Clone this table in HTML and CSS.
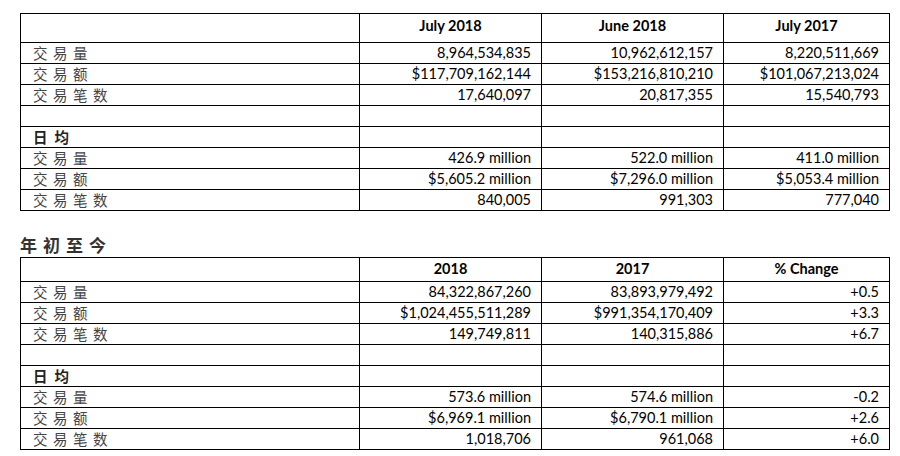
FILE: index.html
```html
<!DOCTYPE html>
<html lang="zh">
<head>
<meta charset="utf-8">
<link rel="stylesheet" href="styles.css">
</head>
<body>
<div class="page">
  <table class="grid grid-month">
    <colgroup><col class="c-label"><col class="c-val"><col class="c-val"><col class="c-last"></colgroup>
    <tr class="head"><td></td><th>July 2018</th><th>June 2018</th><th>July 2017</th></tr>
    <tr><td class="lbl">交易量</td><td class="num">8,964,534,835</td><td class="num">10,962,612,157</td><td class="num">8,220,511,669</td></tr>
    <tr><td class="lbl">交易额</td><td class="num">$117,709,162,144</td><td class="num">$153,216,810,210</td><td class="num">$101,067,213,024</td></tr>
    <tr><td class="lbl">交易笔数</td><td class="num">17,640,097</td><td class="num">20,817,355</td><td class="num">15,540,793</td></tr>
    <tr><td></td><td></td><td></td><td></td></tr>
    <tr><td class="lbl sub">日均</td><td></td><td></td><td></td></tr>
    <tr><td class="lbl">交易量</td><td class="num">426.9 million</td><td class="num">522.0 million</td><td class="num">411.0 million</td></tr>
    <tr><td class="lbl">交易额</td><td class="num">$5,605.2 million</td><td class="num">$7,296.0 million</td><td class="num">$5,053.4 million</td></tr>
    <tr><td class="lbl">交易笔数</td><td class="num">840,005</td><td class="num">991,303</td><td class="num">777,040</td></tr>
  </table>

  <h2 class="section-title">年初至今</h2>

  <table class="grid grid-ytd">
    <colgroup><col class="c-label"><col class="c-val"><col class="c-val"><col class="c-last"></colgroup>
    <tr class="head"><td></td><th>2018</th><th>2017</th><th>% Change</th></tr>
    <tr><td class="lbl">交易量</td><td class="num">84,322,867,260</td><td class="num">83,893,979,492</td><td class="num">+0.5</td></tr>
    <tr><td class="lbl">交易额</td><td class="num">$1,024,455,511,289</td><td class="num">$991,354,170,409</td><td class="num">+3.3</td></tr>
    <tr><td class="lbl">交易笔数</td><td class="num">149,749,811</td><td class="num">140,315,886</td><td class="num">+6.7</td></tr>
    <tr><td></td><td></td><td></td><td></td></tr>
    <tr><td class="lbl sub">日均</td><td></td><td></td><td></td></tr>
    <tr><td class="lbl">交易量</td><td class="num">573.6 million</td><td class="num">574.6 million</td><td class="num">-0.2</td></tr>
    <tr><td class="lbl">交易额</td><td class="num">$6,969.1 million</td><td class="num">$6,790.1 million</td><td class="num">+2.6</td></tr>
    <tr><td class="lbl">交易笔数</td><td class="num">1,018,706</td><td class="num">961,068</td><td class="num">+6.0</td></tr>
  </table>
</div>
</body>
</html>
```

FILE: styles.css
```css
html, body {
  margin: 0;
  padding: 0;
  background: #ffffff;
}

.page {
  padding: 13px 0 0 20px;
  width: 870px;
  font-family: Lato, "Open Sans", "Noto Sans CJK SC", sans-serif;
  color: #000;
}

.grid {
  border-collapse: collapse;
  table-layout: fixed;
  width: 869px;
}

.c-label { width: 339px; }
.c-val { width: 182px; }
.c-last { width: 166px; }

.grid td, .grid th {
  border: 1px solid #000;
  padding: 0 10px;
  height: 20px;
  line-height: 20px;
  font-size: 14.5px;
  white-space: nowrap;
  overflow: hidden;
}

.grid-month .head td, .grid-month .head th {
  height: 24px;
  padding-bottom: 4px;
}
.grid-ytd .head td, .grid-ytd .head th {
  height: 21px;
  padding-bottom: 2px;
}

.grid th {
  font-weight: 700;
  text-align: center;
}

.num { text-align: right; }

.grid .lbl {
  font-family: "Noto Sans CJK SC", sans-serif;
  font-size: 14.5px;
  line-height: 20px;
  letter-spacing: 5.5px;
  color: #444;
  padding-left: 12px;
}

.grid .lbl.sub {
  font-weight: 700;
  color: #222;
  letter-spacing: 7px;
}

.section-title {
  margin: 23px 0 0 0;
  height: 23px;
  line-height: 22px;
  font-family: "Noto Sans CJK SC", sans-serif;
  font-size: 17px;
  font-weight: 700;
  letter-spacing: 6px;
  color: #333;
}
```
